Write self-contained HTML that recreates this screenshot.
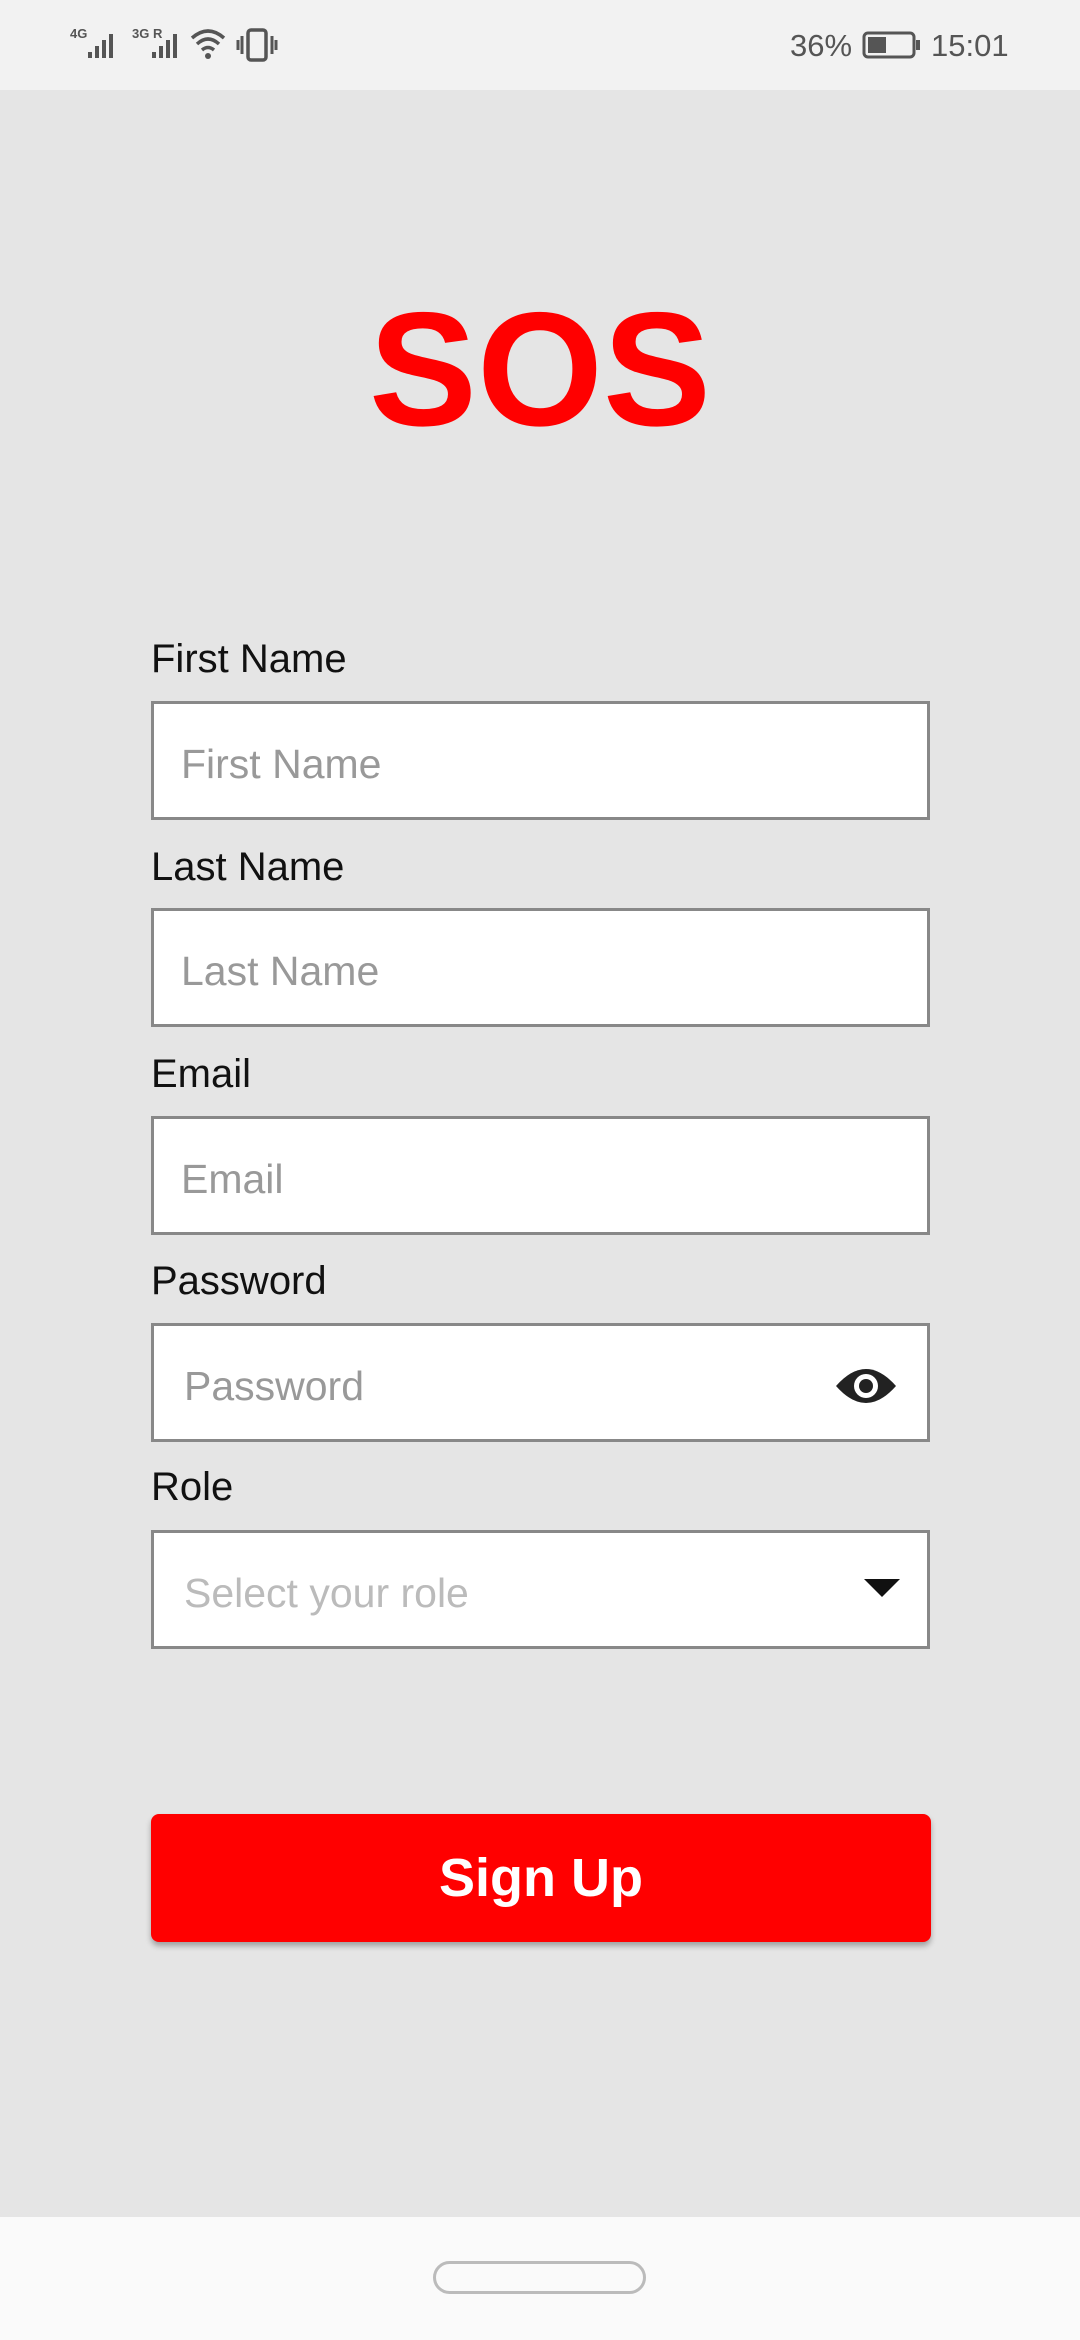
<!DOCTYPE html>
<html><head><meta charset="utf-8"><style>
*{margin:0;padding:0;box-sizing:border-box}
html{width:1080px;height:2340px;overflow:hidden}
body{width:1080px;height:2340px;background:#e5e5e5;font-family:"Liberation Sans",sans-serif;position:relative;overflow:hidden}
.sb{position:absolute;left:0;top:0;width:1080px;height:90px;background:#f2f2f2;color:#555;font-size:31px}
.nav{position:absolute;left:0;top:2217px;width:1080px;height:123px;background:#fafafa}
.pill{position:absolute;left:433px;top:44px;width:213px;height:33px;border:3px solid #bbb;border-radius:17px}
.sos{position:absolute;left:0;width:1080px;top:270px;text-align:center;color:#ff0000;font-weight:bold;font-size:162px;line-height:200px}
.lbl{position:absolute;left:151px;font-size:40px;color:#111}
.in{position:absolute;left:151px;width:779px;height:119px;background:#fff;border:3px solid #888}
.ph{position:absolute;left:27px;top:37px;font-size:41px;color:#999}
.btn{position:absolute;left:151px;top:1814px;width:780px;height:128px;background:#ff0000;border-radius:8px;box-shadow:0 4px 6px rgba(0,0,0,.3);color:#fff;font-size:54px;text-align:center;line-height:128px;font-weight:bold}
</style></head><body>
<div class="sb">
<div style="position:absolute;left:70px;top:26px;font-size:13px;font-weight:bold;color:#555">4G</div>
<svg style="position:absolute;left:88px;top:30px" width="36" height="30"><rect x="0" y="22" width="4" height="6" fill="#555"/><rect x="7" y="16" width="4" height="12" fill="#555"/><rect x="14" y="10" width="4" height="18" fill="#555"/><rect x="21" y="4" width="4" height="24" fill="#555"/></svg>
<div style="position:absolute;left:132px;top:26px;font-size:13px;font-weight:bold;color:#555">3G R</div>
<svg style="position:absolute;left:152px;top:30px" width="36" height="30"><rect x="0" y="22" width="4" height="6" fill="#555"/><rect x="7" y="16" width="4" height="12" fill="#555"/><rect x="14" y="10" width="4" height="18" fill="#555"/><rect x="21" y="4" width="4" height="24" fill="#555"/></svg>
<svg style="position:absolute;left:190px;top:28px" width="40" height="34"><path d="M2 10 Q18 -4 34 10 M7 16 Q18 6 29 16 M12 22 Q18 17 24 22" stroke="#555" stroke-width="3.5" fill="none"/><circle cx="18" cy="28" r="3" fill="#555"/></svg>
<svg style="position:absolute;left:236px;top:28px" width="44" height="34"><rect x="12" y="2" width="18" height="30" rx="3" stroke="#555" stroke-width="3.5" fill="none"/><path d="M6 8v18M2 12v10M36 8v18M40 12v10" stroke="#555" stroke-width="3"/></svg>
<div style="position:absolute;left:790px;top:28px">36%</div>
<svg style="position:absolute;left:862px;top:30px" width="60" height="30"><rect x="2" y="3" width="50" height="24" rx="4" stroke="#555" stroke-width="3" fill="none"/><rect x="6" y="7" width="18" height="16" fill="#555"/><rect x="54" y="10" width="4" height="10" fill="#555"/></svg>
<div style="position:absolute;left:931px;top:28px">15:01</div>
</div>
<div class="sos">SOS</div>
<div class="lbl" style="top:637px">First Name</div>
<div class="in" style="top:701px"><div class="ph">First Name</div></div>
<div class="lbl" style="top:845px">Last Name</div>
<div class="in" style="top:908px"><div class="ph">Last Name</div></div>
<div class="lbl" style="top:1052px">Email</div>
<div class="in" style="top:1116px"><div class="ph">Email</div></div>
<div class="lbl" style="top:1259px">Password</div>
<div class="in" style="top:1323px"><div class="ph" style="left:30px">Password</div>
<svg style="position:absolute;left:680px;top:38px" width="64" height="44" viewBox="0 0 64 44"><path d="M2 22 Q32 -12 62 22 Q32 56 2 22Z" fill="#222"/><circle cx="32" cy="22" r="12" fill="#fff"/><circle cx="32" cy="22" r="7" fill="#222"/></svg></div>
<div class="lbl" style="top:1465px">Role</div>
<div class="in" style="top:1530px"><div class="ph" style="left:30px;color:#bbb">Select your role</div>
<svg style="position:absolute;left:710px;top:46px" width="36" height="20"><path d="M0 0H36L18 18Z" fill="#111"/></svg></div>
<div class="btn">Sign Up</div>
<div class="nav"><div class="pill"></div></div>
</body></html>
